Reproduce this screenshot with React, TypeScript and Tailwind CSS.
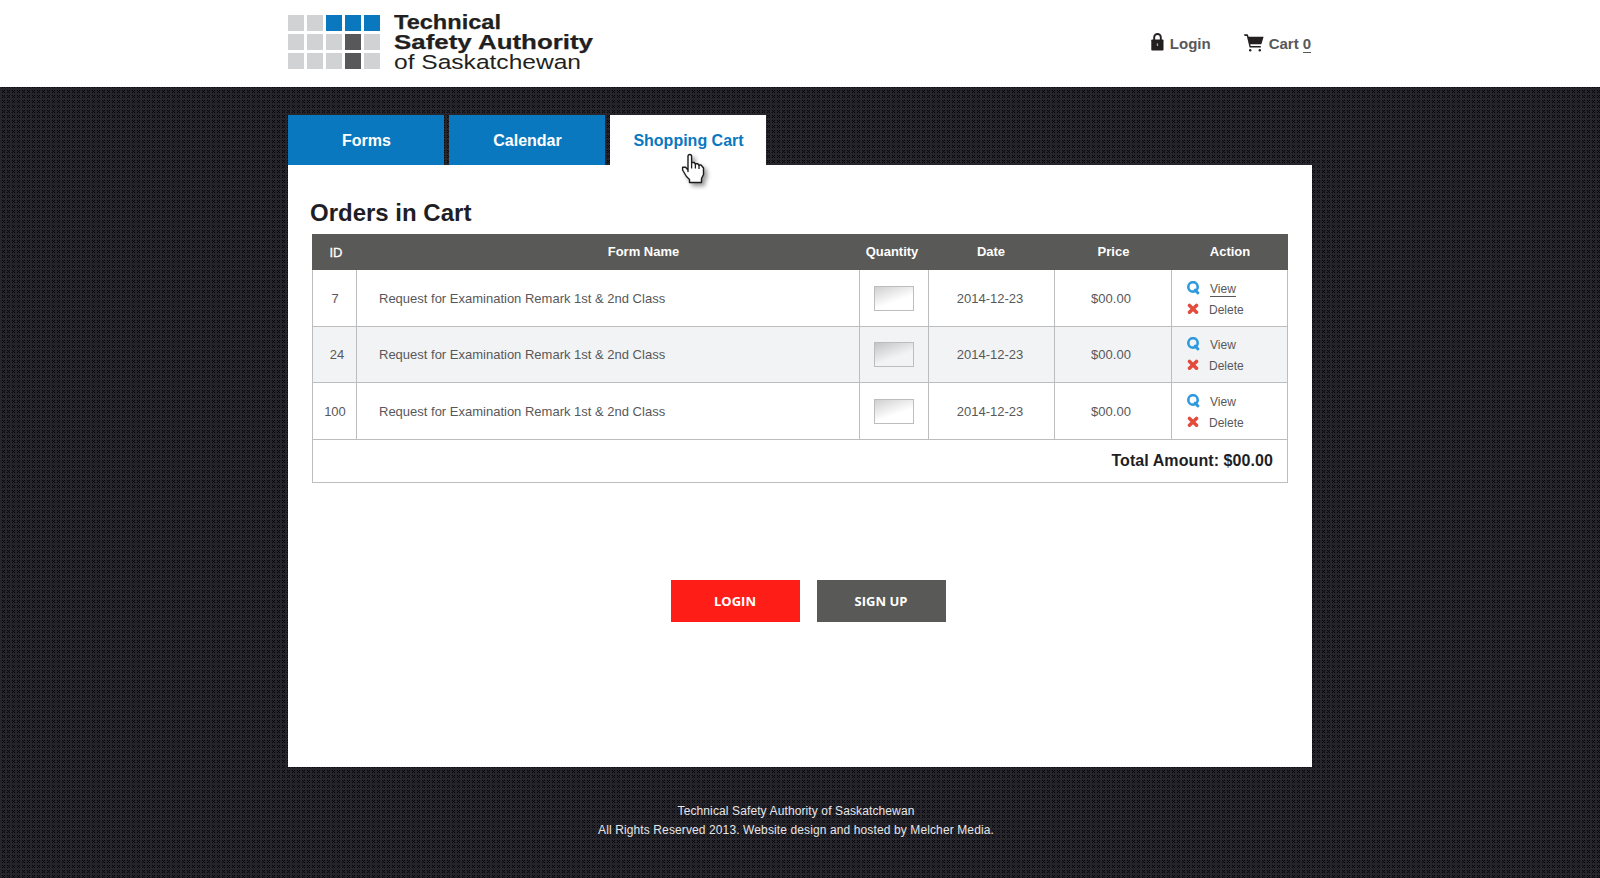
import React from "react";

const TILE =
  "url(\"data:image/svg+xml,%3Csvg xmlns='http://www.w3.org/2000/svg' width='5' height='5' shape-rendering='crispEdges'%3E%3Cpath fill='%2307060b' d='M0 0h1v1h-1zM2 0h1v1h-1zM1 1h1v1h-1zM0 2h1v1h-1zM2 2h1v1h-1z'/%3E%3C/svg%3E\")";

const LIGHT = "bg-[#d1d2d4]";
const BLUE = "bg-[#0a78bf]";
const DARK = "bg-[#58585a]";
const SQUARES = [
  LIGHT, LIGHT, BLUE, BLUE, BLUE,
  LIGHT, LIGHT, LIGHT, DARK, LIGHT,
  LIGHT, LIGHT, LIGHT, DARK, LIGHT,
];

function Logo() {
  return (
    <div className="flex">
      <div className="mt-[15px] grid h-[54px] grid-cols-[repeat(5,16px)] grid-rows-[repeat(3,16px)] gap-[3px]">
        {SQUARES.map((c, i) => (
          <div key={i} className={c} />
        ))}
      </div>
      <svg className="ml-[14px]" width="206" height="80" fill="#231f20" fontFamily="Liberation Sans, Arial, sans-serif" fontSize="20.5">
        <g fontWeight="700" stroke="#231f20" strokeWidth="0.25">
          <text x="0" y="28.5" textLength="107" lengthAdjust="spacingAndGlyphs">Technical</text>
          <text x="0" y="48.5" textLength="199" lengthAdjust="spacingAndGlyphs">Safety Authority</text>
        </g>
        <text x="0" y="68.5" textLength="187" lengthAdjust="spacingAndGlyphs">of Saskatchewan</text>
      </svg>
    </div>
  );
}

function LockIcon() {
  return (
    <svg width="13" height="18" viewBox="0 0 13 18">
      <path d="M3.2 8V4.300a3.3 3.3 0 0 1 6.6 0V8" fill="none" stroke="#231f20" strokeWidth="1.9" />
      <rect x="0.3" y="6.5" width="12.2" height="11" rx="0.8" fill="#231f20" />
      <path d="M5.8 10.4h1.3v2.6H5.8z" fill="#aaa" />
    </svg>
  );
}

function CartIcon() {
  return (
    <svg width="20" height="18" viewBox="0 0 20 18" fill="#231f20">
      <path d="M0 .3h3.6l1.1 2.5h14.9l-2 6.600q-.3.9-1.2.9H6.200l.5 1.700h10.1v1.400H5.600L2.800 1.900H.6z" />
      <circle cx="6.2" cy="16.2" r="1.200" />
      <circle cx="15.8" cy="16.2" r="1.200" />
    </svg>
  );
}

function HandCursor() {
  return (
    <svg className="absolute left-[71px] top-[38px] z-10 drop-shadow-[3px_3px_2px_rgba(0,0,0,0.4)]" width="25" height="32" viewBox="0 0 25 32">
      <path
        d="M7 18.500V3.300Q7 1.500 8.800 1.500T10.600 3.300V9.500h2.600l1 1.200h2.600l1 1.300h2.200l2.500 3v6.500l-2 4v4H8.500v-3L5.500 23.500L1.600 17V14.300H4.600L7 17z"
        fill="#fff"
        stroke="#1c1c1c"
        strokeWidth="1.4"
        strokeLinejoin="round"
      />
      <path d="M10.600 9v6.500M14.400 10.500v5M18 12v4" stroke="#1c1c1c" strokeWidth="1.300" />
    </svg>
  );
}

function ViewIcon() {
  return (
    <svg width="13" height="14" viewBox="0 0 13 14" fill="none" stroke="#2f99de">
      <circle cx="6" cy="5.900" r="4.700" strokeWidth="2.600" />
      <path d="M8.200 9l2.700 3" strokeWidth="2.900" strokeLinecap="round" />
    </svg>
  );
}

function DeleteIcon() {
  return (
    <svg width="13" height="12" viewBox="0 0 13 12" stroke="#e34b3d" strokeWidth="3.500" strokeLinecap="round">
      <path d="M2.500 2.400l7 6.800M9.500 2.400l-7 6.800" />
    </svg>
  );
}

const COLS = "grid grid-cols-[44px_503px_69px_126px_117px_116px]";

const ROWS = [
  { id: "7", idPad: "pl-px", height: "h-[57px]", top: "pt-[11px]", textTop: "pt-px", bg: "bg-white", qty: "from-[#d0d0d1] to-white", link: "border-[#58585a]" },
  { id: "24", idPad: "pl-[5px]", height: "h-[56px]", top: "pt-[10px]", textTop: "pt-0", bg: "bg-[#f2f3f5]", qty: "from-[#c3c4c6] to-[#f2f3f5]", link: "border-transparent" },
  { id: "100", idPad: "pl-px", height: "h-[57px]", top: "pt-[11px]", textTop: "pt-px", bg: "bg-white", qty: "from-[#d0d0d1] to-white", link: "border-transparent" },
];

function OrdersTable() {
  return (
    <div className="ml-6 w-[976px] text-[13px] text-[#58585a]">
      <div className={`${COLS} h-9 items-center bg-[#595957] text-center font-bold text-white`}>
        <div className="pl-[4px] pt-[1px] font-normal [-webkit-text-stroke:0.300px_white]">ID</div>
        <div className="pl-[72px]">Form Name</div>
        <div className="pr-[3px]">Quantity</div>
        <div>Date</div>
        <div className="pl-[2px]">Price</div>
        <div className="pl-[2px]">Action</div>
      </div>
      <div className="border-x border-[#bcbdbf]">
        {ROWS.map((r) => (
          <div
            key={r.id}
            className={`grid grid-cols-[43px_503px_69px_126px_117px_116px] border-b border-[#bcbdbf] ${r.height} ${r.bg} [&>*]:border-[#bcbdbf]`}
          >
            <div className={`flex items-center justify-center ${r.idPad} ${r.textTop}`}>{r.id}</div>
            <div className={`flex items-center border-l pl-[22px] ${r.textTop}`}>Request for Examination Remark 1st &amp; 2nd Class</div>
            <div className="flex items-center border-l pl-[14px]">
              <div className={`h-[25px] w-10 border border-[#bcbdbf] bg-linear-[160deg] ${r.qty} to-60%`} />
            </div>
            <div className={`flex items-center justify-center border-l pr-[3px] ${r.textTop}`}>2014-12-23</div>
            <div className={`flex items-center justify-center border-l pr-[4px] ${r.textTop}`}>$00.00</div>
            <div className={`border-l pl-[15px] text-xs ${r.top}`}>
              <div className="flex h-5">
                <ViewIcon />
                <span className={`ml-[10px] mt-[1px] h-[15px] border-b leading-[14px] ${r.link}`}>View</span>
              </div>
              <div className="flex h-[21px] pt-[2px]">
                <DeleteIcon />
                <span className="ml-[9px] leading-[14px]">Delete</span>
              </div>
            </div>
          </div>
        ))}
        <div className="flex h-[43px] items-center justify-end border-b border-[#bcbdbf] pr-[14px] text-base font-bold tracking-[0.080px] text-[#1f1e25]">
          Total Amount: $00.00
        </div>
      </div>
    </div>
  );
}

export default function App() {
  return (
    <div
      className="flex h-[878px] w-[1600px] flex-col overflow-hidden bg-[#26252c] font-['Liberation_Sans',Arial,sans-serif]"
      style={{ backgroundImage: TILE, backgroundPosition: "2px 0px" }}
    >
      <header className="h-[87px] bg-white">
        <div className="mx-auto flex w-[1024px] justify-between">
          <Logo />
          <div className="flex pr-px pt-[33px] text-[15px] font-bold leading-[22px] text-[#58585a]">
            <LockIcon />
            <span className="ml-[6px]">Login</span>
            <div className="ml-[33px] pt-[1px]"><CartIcon /></div>
            <span className="ml-[5px]">Cart</span>
            <span className="ml-1 h-5 border-b border-[#58585a]">0</span>
          </div>
        </div>
      </header>
      <main className="mx-auto w-[1024px] pt-7">
        <nav className="flex gap-[5px] text-base font-bold text-white">
          <div className="flex h-[50px] w-[156px] items-center justify-center bg-[#0a78bf] pl-px pt-[2px]">Forms</div>
          <div className="flex h-[50px] w-[156px] items-center justify-center bg-[#0a78bf] pl-px pt-[2px]">Calendar</div>
          <div className="relative flex h-[50px] w-[156px] items-center justify-center bg-white pl-px pt-[2px] text-[#0a78bf]">
            Shopping Cart
            <HandCursor />
          </div>
        </nav>
        <section className="h-[602px] bg-white pt-[33px]">
          <h1 className="h-9 pl-[22px] text-2xl font-bold leading-[30px] text-[#1f1e25]">Orders in Cart</h1>
          <OrdersTable />
          <div className="ml-[383px] mt-[97px] flex gap-[17px] font-['Open_Sans',sans-serif] text-[13px] font-bold text-white">
            <button className="h-[42px] w-[129px] bg-[#ff1d17] pr-px pt-[2px]">LOGIN</button>
            <button className="h-[42px] w-[129px] bg-[#595957] pr-px pt-[2px]">SIGN UP</button>
          </div>
        </section>
      </main>
      <footer className="pr-[8px] pt-[35px] text-center text-xs leading-[19px] tracking-[0.115px] text-[#e6e6e8]">
        <p>Technical Safety Authority of Saskatchewan</p>
        <p>All Rights Reserved 2013. Website design and hosted by Melcher Media.</p>
      </footer>
    </div>
  );
}
